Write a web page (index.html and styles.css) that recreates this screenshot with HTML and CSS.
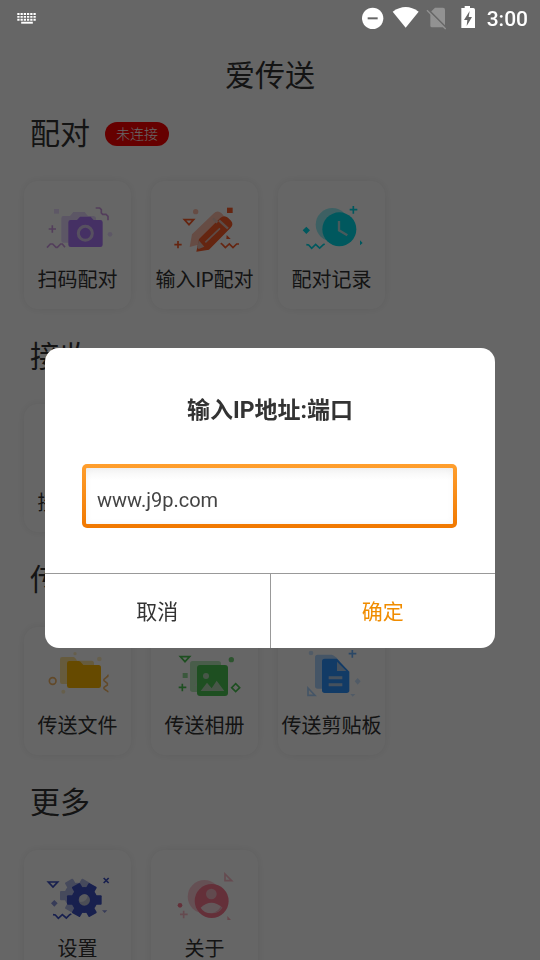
FILE: index.html
```html
<!DOCTYPE html>
<html lang="zh-CN">
<head>
    <meta charset="UTF-8">
    <meta name="viewport" content="width=device-width, initial-scale=1.0">
    <title>爱传送</title>
    <link rel="stylesheet" href="styles.css">
</head>
<body>
    <div class="statusbar">
        <svg class="keyboard" viewBox="0 0 60 34" width="20" height="11" aria-hidden="true">
            <path d="M0 3h60M0 12h60M0 21h60" stroke-width="6" stroke-dasharray="7 3"/>
            <path d="M12 30h36" stroke-width="6"/>
        </svg>
        <svg viewBox="0 0 345 72" width="115" height="24" aria-hidden="true">
            <circle cx="32" cy="37" r="32" fill="#fff"/>
            <path d="M17 37h30" stroke="#666" stroke-width="6"/>
            <path d="M92 17Q131-11 170 17L131 65Z" fill="#fff"/>
            <path d="M219 5h24q6 0 6 6v50q0 3-3 3h-36q-5 0-5-5V19z" fill="#929292"/>
            <path d="M198 10l56 56" stroke="#666" stroke-width="5"/>
            <path d="M198 10l56 56" stroke="#929292" stroke-width="4" transform="translate(-3 3)"/>
            <path d="M298 6h10V0h16v6h10q5 0 5 5v55h-41z" fill="#fff"/>
            <path d="M323 15l-17 27h10l-2 18 16-27h-10z" fill="#666"/>
        </svg>
        <span class="time">3:00</span>
    </div>

    <main class="page">
        <h1>爱传送</h1>

        <!-- 配对 -->
        <section>
            <h2>配对 <span class="badge">未连接</span></h2>
            <div class="cards">
                <a class="card purple" href="#">
                    <svg viewBox="12 33 321 240" aria-hidden="true">
                        <path class="back" d="M130 138h20l10-12h34l10 12h16q8 0 8 8v64q0 8-8 8h-90q-6 0-6-6v-67q0-7 6-7z"/>
                        <path d="M152 150h19l9-10h32l9 10h20q7 0 7 7v67q0 7-7 7h-89q-7 0-7-7v-67q0-7 7-7z"/>
                        <circle cx="196" cy="190" r="21" fill="none" stroke="#d9c9ef" stroke-width="9"/>
                        <rect class="pale" x="102" y="117" width="15" height="14"/>
                        <circle class="pale" cx="270" cy="193" r="7"/>
                        <path class="line" d="M97 166v22M86 177h22M81 233l10-11h7l10 10h4l10-10h5l8 10M227 114h12l5 5v10l4 4h10l6 6v12"/>
                    </svg>
                    <span>扫码配对</span>
                </a>
                <a class="card orange" href="#">
                    <svg viewBox="18 33 321 240" aria-hidden="true">
                        <path class="back" d="M134 231l7-38 64-62q12-12 24-2l6 7q7 10-2 20l-68 67z"/>
                        <path d="M154 245l8-38 63-62q12-12 24-2l9 9q9 10-1 21l-65 66z"/>
                        <path d="M204 145l13 13M222 151l27 25" stroke="#e6bdb2" stroke-width="7" fill="none"/>
                        <path d="M181 217l44-42" stroke="#e6bdb2" stroke-width="5"/>
                        <path d="M161 211l17 19-17 7-4-3z" fill="#e6bdb2"/>
                        <rect x="246" y="113" width="17" height="16"/>
                        <circle class="back" cx="152" cy="125" r="8"/>
                        <path d="M245 195l12 12h-13z"/>
                        <path class="line" d="M118 149h28l-14 15zM99 213v22M88 224h22M227 220l5 3 9 10 12-11 11 11 11-11h7"/>
                    </svg>
                    <span>输入IP配对</span>
                </a>
                <a class="card cyan" href="#">
                    <svg viewBox="24 33 321 240" aria-hidden="true">
                        <circle class="back" cx="187" cy="164" r="50"/>
                        <circle cx="208" cy="178" r="51"/>
                        <path d="M207 153v28l25 15" fill="none" stroke="#b3e0e5" stroke-width="7"/>
                        <path d="M109 170l11 11-11 11-11-11zM270 211l8 8-8 7z"/>
                        <path class="line" d="M250 108v23M239 119h23M109 224l7 1 9 10 12-12 12 11 11-10 4-2"/>
                    </svg>
                    <span>配对记录</span>
                </a>
            </div>
        </section>

        <!-- 接收 -->
        <section>
            <h2>接收</h2>
            <div class="cards">
                <a class="card blue" href="#">
                    <svg viewBox="0 0 321 240" aria-hidden="true">
                        <path d="M120 110h25l15 14h50v70h-90z"/>
                    </svg>
                    <span>接收文件</span>
                </a>
            </div>
        </section>

        <!-- 传送 -->
        <section>
            <h2>传送</h2>
            <div class="cards">
                <a class="card yellow" href="#">
                    <svg viewBox="12 -9 321 240" aria-hidden="true">
                        <path class="back" d="M126 81h34q5 0 11 11h44q7 0 7 8v55q0 7-7 7h-89q-6 0-6-7V88q0-7 6-7z"/>
                        <path d="M148 93h28q5 0 8 5l6 7h46q7 0 7 8v54q0 7-7 7h-88q-7 0-7-7v-67q0-7 7-7z"/>
                        <circle class="pale" cx="165" cy="71" r="5"/>
                        <circle class="pale" cx="238" cy="87" r="7"/>
                        <circle class="pale" cx="130" cy="185" r="6"/>
                        <circle class="line" cx="98" cy="153" r="10"/>
                        <path class="line" d="M264 134q1 5-5 8l-7 6v4l10 8v5l-10 7v4l6 5q6 2 6 6"/>
                    </svg>
                    <span>传送文件</span>
                </a>
                <a class="card green" href="#">
                    <svg viewBox="18 -9 321 240" aria-hidden="true">
                        <rect class="back" x="135" y="93" width="93" height="93" rx="8"/>
                        <path d="M147 168l10-13v13z" fill="#c4e0c5"/>
                        <rect x="156" y="105" width="93" height="93" rx="9"/>
                        <circle cx="183" cy="138" r="9" fill="#b3d8b5"/>
                        <path d="M167 183l19-25 14 17 15-23 23 31z" fill="#b3d8b5"/>
                        <circle cx="259" cy="89" r="8" opacity="0.8"/>
                        <rect x="113" y="129" width="15" height="15" opacity="0.6"/>
                        <path class="line" d="M106 80h28l-14 15zM112 161v23M101 172h23M272 161l12 12-12 12-12-12z"/>
                    </svg>
                    <span>传送相册</span>
                </a>
                <a class="card blue" href="#">
                    <svg viewBox="24 -9 321 240" aria-hidden="true">
                        <path class="back" d="M143 74h42q10 0 31 30v65q0 7-7 7h-66q-8 0-8-8V82q0-8 8-8z"/>
                        <path d="M164 86h37l37 39v56q0 8-8 8h-66q-8 0-8-8V94q0-8 8-8z"/>
                        <path d="M201 95v28h28z" fill="#aecbe8"/>
                        <path d="M176 143h41M176 164h41" stroke="#aecbe8" stroke-width="9"/>
                        <circle class="pale" cx="123" cy="69" r="7"/>
                        <path class="pale" d="M263 144l9 10-9 10-9-10zM241 192h15l-8 8z"/>
                        <path class="line" d="M247 60v23M236 71h23" opacity="0.7"/>
                        <path class="line back" d="M114 174v22h21z"/>
                    </svg>
                    <span>传送剪贴板</span>
                </a>
            </div>
        </section>

        <!-- 更多 -->
        <section>
            <h2>更多</h2>
            <div class="cards">
                <a class="card indigo" href="#">
                    <svg viewBox="12 30 321 240" aria-hidden="true">
                        <defs>
                            <g id="gear">
                                <circle r="39"/>
                                <rect x="-52" y="-14" width="104" height="28" rx="3"/>
                                <rect x="-52" y="-14" width="104" height="28" rx="3" transform="rotate(60)"/>
                                <rect x="-52" y="-14" width="104" height="28" rx="3" transform="rotate(120)"/>
                            </g>
                        </defs>
                        <use class="back" href="#gear" x="172" y="167"/>
                        <use href="#gear" x="193" y="180"/>
                        <circle cx="193" cy="180" r="17" fill="#bfc2d8"/>
                        <path d="M181 169q10-10 22-3-1 19-22 20-6-8 0-17z" fill="#e4e5ee"/>
                        <path d="M103 180l10 10-10 10-10-10zM246 211h16l-8 8z" opacity="0.6"/>
                        <path class="line" d="M85 126h28l-14 15zM251 114l15 15M266 114l-15 15M99 224l7 1 9 10 12-11 12 10 10-10 5-2"/>
                    </svg>
                    <span>设置</span>
                </a>
                <a class="card pink" href="#">
                    <svg viewBox="18 30 321 240" aria-hidden="true">
                        <circle class="back" cx="178" cy="170" r="50"/>
                        <circle cx="200" cy="183" r="51"/>
                        <circle cx="199" cy="162" r="16" fill="#f3b8c3"/>
                        <path d="M167 203q32-29 65 0-11 17-33 17t-32-17z" fill="#f8dce1"/>
                        <path d="M203 219q16-5 24-19l5 3q-9 14-29 16z" fill="#edabb8"/>
                        <circle cx="105" cy="196" r="7"/>
                        <path d="M247 228l11 12h-11z" opacity="0.6"/>
                        <path class="line" d="M240 102v20h20zM116 212v23M105 223h23" opacity="0.5"/>
                    </svg>
                    <span>关于</span>
                </a>
            </div>
        </section>
    </main>

    <div class="overlay">
        <form class="dialog" role="dialog" aria-labelledby="dialog-title">
            <label class="dialog-title" id="dialog-title" for="address">输入IP地址:端口</label>
            <input class="address" id="address" type="text" value="www.j9p.com">
            <div class="actions">
                <button type="button">取消</button>
                <button type="button" class="confirm">确定</button>
            </div>
        </form>
    </div>
</body>
</html>
```
FILE: styles.css
```css
* {
    box-sizing: border-box;
}
body {
    margin: 0;
    height: 100vh;
    overflow: hidden;
    background-color: #fff;
    color: #333;
    font-family: Roboto, "Noto Sans CJK SC", sans-serif;
}

/* status bar, stays above the overlay */
.statusbar {
    position: relative;
    z-index: 2;
    display: flex;
    align-items: center;
    gap: 10px;
    height: 36px;
    padding: 0 12px 0 17px;
    color: #fff;
}
.statusbar .keyboard {
    margin-right: auto;
    fill: none;
    stroke: #fff;
}
.time {
    padding-top: 2px;
    font-size: 21px;
    font-weight: 500;
}

.page h1 {
    margin: 0;
    padding-top: 2px;
    font-size: 30px;
    font-weight: 400;
    line-height: 76px;
    text-align: center;
}
.page h2 {
    display: flex;
    align-items: center;
    gap: 15px;
    margin: 0;
    padding: 0 30px;
    font-size: 30px;
    font-weight: 400;
    line-height: 40px;
}
.badge {
    padding: 0 11px;
    border-radius: 12px;
    background-color: #f00;
    color: #fff;
    font-size: 14px;
    font-weight: 300;
    line-height: 24px;
}

/* cards */
.cards {
    display: flex;
    flex-wrap: wrap;
    gap: 20px;
    padding: 27px 24px 28px;
}
.card {
    display: flex;
    flex-direction: column;
    align-items: center;
    gap: 4px;
    width: 107px;
    padding-bottom: 14px;
    border-radius: 14px;
    background-color: #fff;
    box-shadow: 0 0 8px rgba(0, 0, 0, 0.08);
    color: #333;
    font-size: 20px;
    line-height: 30px;
    text-decoration: none;
    white-space: nowrap;
}
.card svg {
    width: 100%;
    height: 80px;
    fill: currentColor;
}
.card span {
    color: #333;
}
.back {
    opacity: 0.4;
}
.pale {
    opacity: 0.25;
}
.card .line {
    fill: none;
    stroke: currentColor;
    stroke-width: 5;
}
.purple {
    color: #ad78fa;
}
.purple .line {
    color: #cf9be4;
}
.purple .back {
    opacity: 0.3;
}
.orange {
    color: #fd5c2a;
}
.cyan {
    color: #00dcea;
}
.yellow {
    color: #ffb900;
}
.yellow .line {
    color: #f4b768;
}
.green {
    color: #4cc553;
}
.blue {
    color: #2f93ff;
}
.indigo {
    color: #3d50c3;
}
.pink {
    color: #fb7890;
}

/* dialog */
.overlay {
    position: fixed;
    inset: 0;
    z-index: 1;
    display: flex;
    align-items: center;
    padding: 36px 45px 0;
    background-color: rgba(0, 0, 0, 0.6);
}
.dialog {
    display: flex;
    flex-direction: column;
    width: 100%;
    border-radius: 14px;
    background-color: #fff;
    overflow: hidden;
}
.dialog-title {
    padding: 45px 0 35px;
    font-size: 23px;
    font-weight: 700;
    line-height: 36px;
    text-align: center;
}
.address {
    height: 64px;
    margin: 0 38px 45px 37px;
    padding: 8px 11px 0;
    border: 4px solid transparent;
    border-radius: 5px;
    outline: none;
    background: linear-gradient(#f4f4f4, #fff 12px) padding-box,
                linear-gradient(#ff9f2e, #f07800) border-box;
    box-shadow: inset 0 0 6px rgba(0, 0, 0, 0.05);
    color: #444;
    font-family: inherit;
    font-size: 20px;
}
.actions {
    display: flex;
    border-top: 1px solid #999;
}
.actions button {
    flex: 1;
    padding: 2px 0 0;
    border: 0;
    background: none;
    color: #333;
    font-family: inherit;
    font-size: 21px;
    line-height: 72px;
}
.actions .confirm {
    border-left: 1px solid #999;
    color: #f08c00;
}
```
